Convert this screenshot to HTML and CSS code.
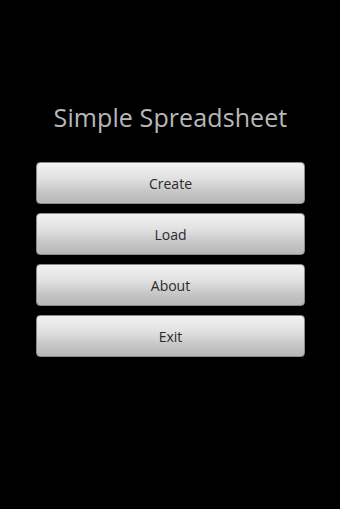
FILE: index.html
```html
<!DOCTYPE html>
<html>
<head>
<meta charset="utf-8">
<link rel="stylesheet" href="styles.css">
</head>
<body>
<div class="screen">
  <h1 class="title">Simple Spreadsheet</h1>
  <div class="menu">
    <button class="btn">Create</button>
    <button class="btn">Load</button>
    <button class="btn">About</button>
    <button class="btn">Exit</button>
  </div>
</div>
</body>
</html>
```
FILE: styles.css
```css
html, body {
  margin: 0;
  padding: 0;
  background: #000;
}
.screen {
  width: 340px;
  height: 509px;
  box-sizing: border-box;
  padding: 100px 35px 0 36px;
  font-family: "Open Sans", "DejaVu Sans", sans-serif;
}
.title {
  margin: 0;
  height: 34px;
  line-height: 34px;
  text-align: center;
  font-size: 25px;
  font-weight: normal;
  color: #b8b8b8;
  letter-spacing: 0.1px;
}
.menu {
  margin-top: 28px;
  display: flex;
  flex-direction: column;
  gap: 9px;
}
.btn {
  display: block;
  width: 100%;
  height: 42px;
  margin: 0;
  padding: 0;
  border: 1px solid #8a8a8a;
  border-radius: 4px;
  background: linear-gradient(to bottom, #f2f2f2 0%, #e0e0e0 40%, #c4c4c4 75%, #b8b8b8 100%);
  font-family: "Open Sans", "DejaVu Sans", sans-serif;
  font-size: 14px;
  color: #2a2a2a;
  text-align: center;
}
```
